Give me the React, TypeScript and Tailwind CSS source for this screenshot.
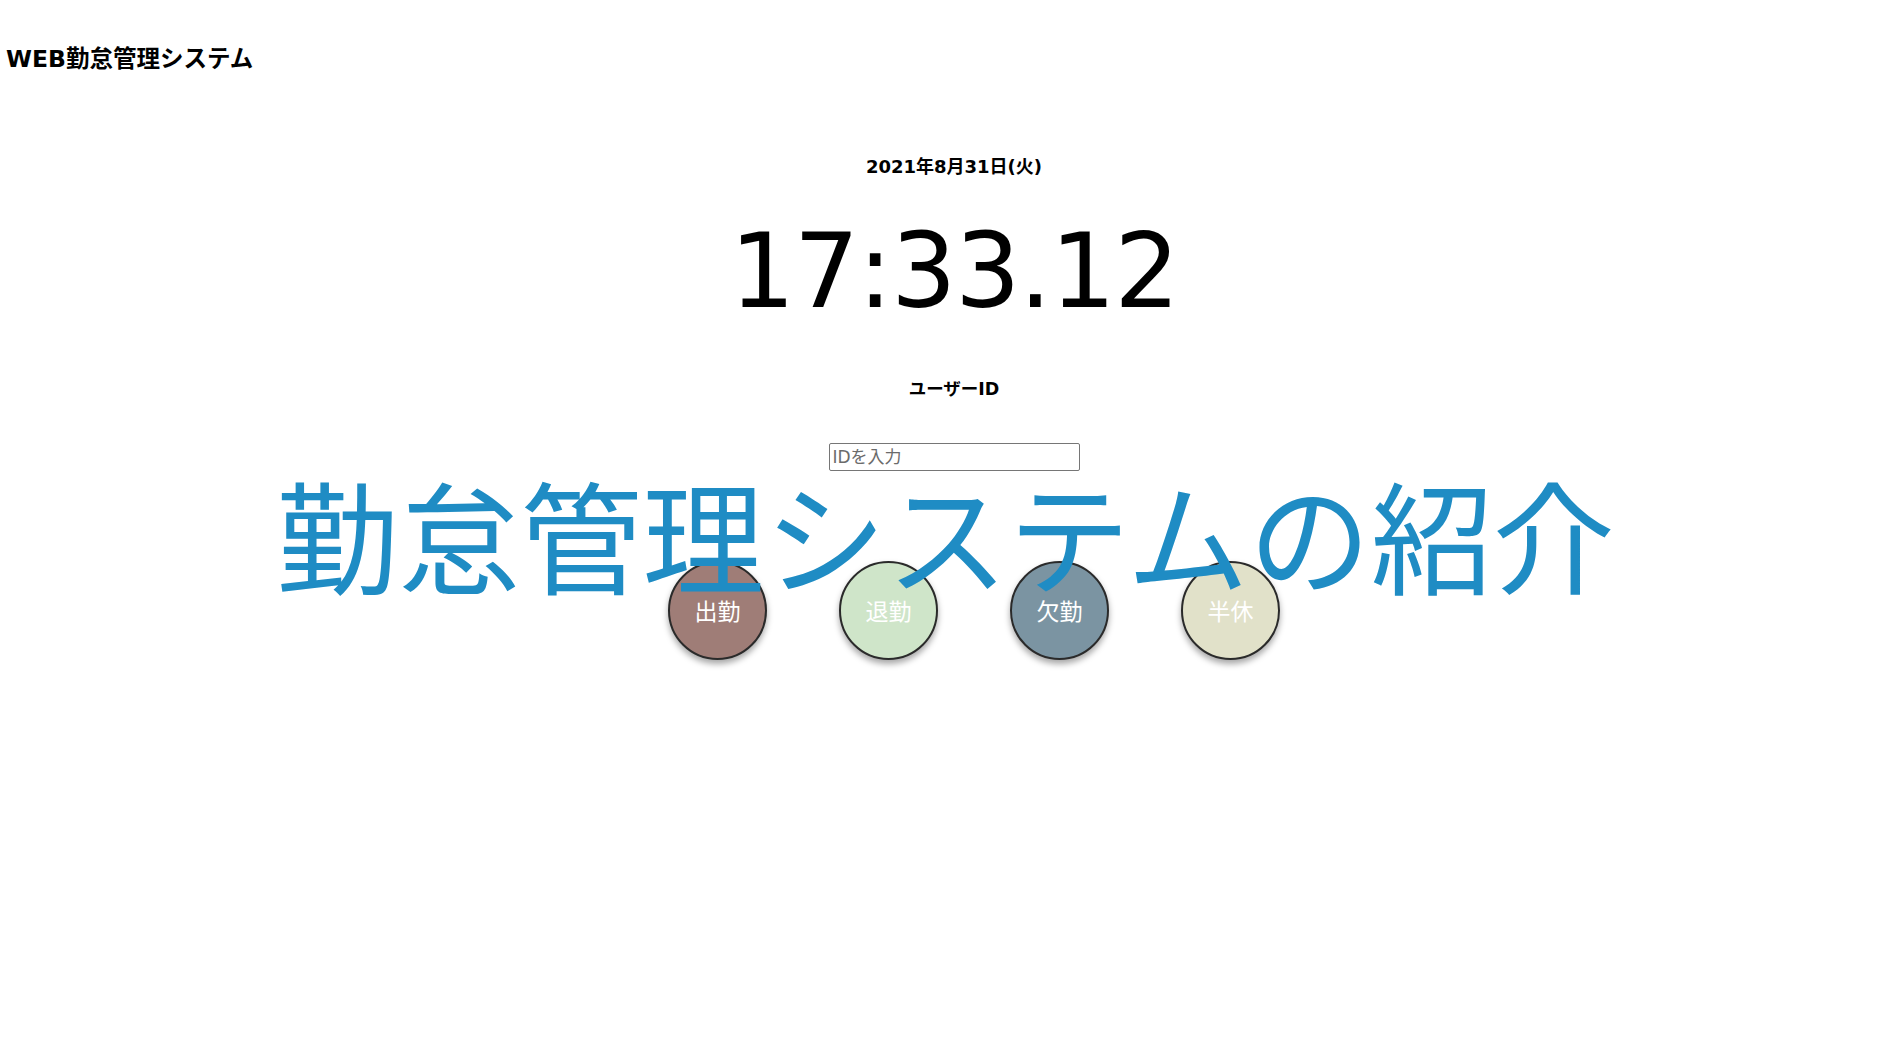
import React from "react";

const jp = '"DejaVu Sans", "Noto Sans CJK JP", sans-serif';

const buttons = [
  { label: "出勤", cls: "bg-[#9f7d77]" },
  { label: "退勤", cls: "bg-[#cfe5c9]" },
  { label: "欠勤", cls: "bg-[#7b94a2]" },
  { label: "半休", cls: "bg-[#e1e1c9]" },
];

export default function App() {
  return (
    <div className="relative w-[1891px] h-[1040px] bg-white overflow-hidden text-black" style={{ fontFamily: jp }}>
      <h1 className="mt-[43px] h-[32px] leading-[32px] pl-[6px] text-[23.5px] font-bold">WEB勤怠管理システム</h1>
      <main className="flex flex-col items-center pl-[17px]">
        <div className="mt-[80px] h-[24px] leading-[24px] text-[18px] font-bold">2021年8月31日(火)</div>
        <div className="mt-[41px] h-[103px] leading-[103px] text-[103px] tracking-[-1.5px]" style={{ fontFamily: '"DejaVu Sans", sans-serif' }}>17:33.12</div>
        <div className="mt-[54px] h-[24px] leading-[24px] text-[17.5px] font-bold">ユーザーID</div>
        <input
          type="text"
          placeholder="IDを入力"
          className="mt-[42px] w-[251px] h-[28px] px-[3px] border border-[#767676] rounded-[2px] text-[17px] leading-[26px] placeholder:text-[#6b6b6b] outline-none"
          style={{ fontFamily: '"DejaVu Sans", "Noto Sans CJK JP", sans-serif' }}
        />
        <div className="mt-[90px] flex gap-[72px] pl-[40px]">
          {buttons.map((b) => (
            <button
              key={b.label}
              className={`w-[99px] h-[99px] rounded-full border-2 border-[#2a2a2a] shadow-[0_4px_6px_rgba(0,0,0,0.35)] text-white text-[23px] flex items-center justify-center ${b.cls}`}
              style={{ fontFamily: '"Noto Sans CJK JP", sans-serif' }}
            >
              {b.label}
            </button>
          ))}
        </div>
      </main>
      <div
        className="absolute inset-x-0 top-[471px] text-center text-[122px] leading-none font-normal text-[#1f8cc4] pointer-events-none whitespace-nowrap"
        style={{ fontFamily: '"Noto Sans CJK JP", sans-serif' }}
      >
        勤怠管理システムの紹介
      </div>
    </div>
  );
}
